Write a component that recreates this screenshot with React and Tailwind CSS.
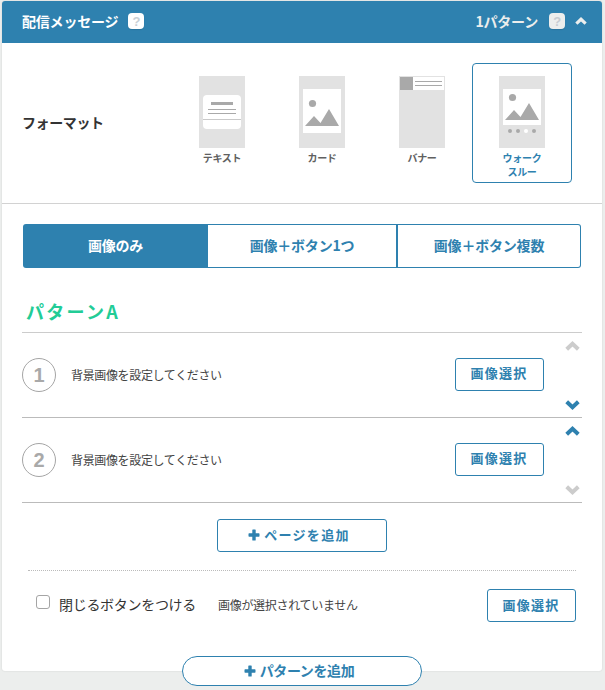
import React from "react";

function Chevron({ down, className, size = 15 }) {
  return (
    <svg
      className={className}
      width={size}
      height={(size * 10) / 15}
      viewBox="0 0 15 10"
      fill="none"
      stroke="currentColor"
      strokeWidth="4"
    >
      <path d={down ? "M1.7 1.8 L7.5 7.2 L13.3 1.8" : "M1.7 8.2 L7.5 2.8 L13.3 8.2"} />
    </svg>
  );
}

function Plus({ className }) {
  return (
    <svg className={className} width="12" height="12" viewBox="0 0 12 12" fill="currentColor">
      <path d="M4.9 0.5h2.2a.6.6 0 0 1 .6.6v3.2h3.2a.6.6 0 0 1 .6.6v2.2a.6.6 0 0 1-.6.6H7.7v3.2a.6.6 0 0 1-.6.6H4.9a.6.6 0 0 1-.6-.6V7.7H1.1a.6.6 0 0 1-.6-.6V4.9a.6.6 0 0 1 .6-.6h3.2V1.1a.6.6 0 0 1 .6-.6z" />
    </svg>
  );
}

function Help({ className }) {
  return (
    <span
      className={`flex h-4 w-4 items-center justify-center rounded-[4px] font-['Liberation_Sans',sans-serif] text-[13px] leading-none font-bold shadow-[0_1px_1px_rgba(0,0,0,0.1)] ${className}`}
    >
      ?
    </span>
  );
}

function TextArt() {
  return (
    <svg width="46" height="72" viewBox="0 0 46 72">
      <rect width="46" height="72" fill="#e2e2e2" />
      <rect x="4" y="19" width="38" height="34" rx="4" fill="#fff" />
      <rect x="12" y="26" width="22" height="3" fill="#a9a9a9" />
      <rect x="9" y="33" width="28" height="1" fill="#a9a9a9" />
      <rect x="9" y="37" width="28" height="1" fill="#a9a9a9" />
      <rect x="4" y="43" width="38" height="1" fill="#c9c9c9" />
    </svg>
  );
}

function CardArt() {
  return (
    <svg width="46" height="72" viewBox="0 0 46 72">
      <rect width="46" height="72" fill="#e2e2e2" />
      <rect x="4" y="13" width="38" height="44" fill="#fff" />
      <circle cx="13.5" cy="27.5" r="3.6" fill="#a9a9a9" />
      <path d="M6 50 L15 40 L21.5 47 L30 33 L40 50 Z" fill="#a9a9a9" />
    </svg>
  );
}

function BannerArt() {
  return (
    <svg width="46" height="72" viewBox="0 0 46 72">
      <rect width="46" height="72" fill="#e2e2e2" />
      <rect x="1" y="1" width="44" height="13" fill="#fff" />
      <rect x="1" y="1" width="13" height="13" fill="#a9a9a9" />
      <rect x="16" y="5" width="27" height="1" fill="#a9a9a9" />
      <rect x="16" y="9" width="27" height="1" fill="#a9a9a9" />
    </svg>
  );
}

function WalkArt() {
  return (
    <svg width="46" height="72" viewBox="0 0 46 72">
      <rect width="46" height="72" fill="#e2e2e2" />
      <rect x="4" y="13" width="38" height="36" fill="#fff" />
      <circle cx="13.5" cy="21.5" r="3.6" fill="#a9a9a9" />
      <path d="M6 44 L15 34 L21.5 41 L30 27 L40 44 Z" fill="#a9a9a9" />
      <circle cx="11" cy="55" r="2" fill="#a9a9a9" />
      <circle cx="19" cy="55" r="2" fill="#a9a9a9" />
      <circle cx="27" cy="55" r="2" fill="#fff" />
      <circle cx="35" cy="55" r="2" fill="#a9a9a9" />
    </svg>
  );
}

function Format({ art, children, selected }) {
  return (
    <div
      className={`flex h-[120px] w-[100px] flex-col items-center rounded-[4px] border pt-3 text-center text-[10px] leading-[14px] font-bold tracking-[-0.3px] ${
        selected ? "border-[#2e81af] text-[#2e81af]" : "border-transparent text-[#606060]"
      }`}
    >
      {art}
      <div className="mt-[3px]">{children}</div>
    </div>
  );
}

function SelectButton() {
  return (
    <button className="block h-[33px] w-[89px] rounded-[3px] border border-[#2e81af] pr-[1px] pb-[3px] text-[13px] leading-none font-bold tracking-[1.3px] text-[#2e81af]">
      画像選択
    </button>
  );
}

function PageRow({ n, upClass, downClass }) {
  return (
    <div className="flex h-[85px] items-center border-b border-[#bbb]">
      <div className="flex h-[34px] w-[34px] items-center justify-center rounded-full border border-[#a5a5a5] font-['Liberation_Sans',sans-serif] text-[20px] leading-none font-bold text-[#a9a9a9]">
        {n}
      </div>
      <div className="ml-[15px] text-[12px] leading-none tracking-[-0.35px] text-[#444]">
        背景画像を設定してください
      </div>
      <div className="ml-auto pb-[2px]">
        <SelectButton />
      </div>
      <div className="mr-[2px] ml-5 flex h-full w-4 flex-col items-center justify-between pt-2 pb-[7px]">
        <Chevron className={upClass} />
        <Chevron down className={downClass} />
      </div>
    </div>
  );
}

export default function App() {
  return (
    <div className="h-[690px] w-[605px] overflow-hidden bg-[#eceeed] pt-[1px] pl-[2px] font-['Noto_Sans_CJK_JP',sans-serif]">
      <div className="h-[670px] w-[600px] rounded-[3px] bg-white shadow-[0_0_2px_rgba(0,0,0,0.12)]">
        <div className="flex h-[42px] items-center rounded-t-[3px] bg-[#2e81af] pr-[15px] pb-[2px] pl-5 text-[14px] leading-none font-bold tracking-[-0.2px] text-white">
          <span>配信メッセージ</span>
          <Help className="ml-[10px] bg-white text-[#c9d0d6]" />
          <span className="ml-auto text-[#eceeed]">1パターン</span>
          <Help className="ml-[11px] bg-[#eceeed] text-[#c6ccd2]" />
          <Chevron size={12} className="ml-[10px] text-[#eceeed]" />
        </div>

        <div className="flex h-[161px] items-start border-b border-[#d2d2d2] pt-5">
          <div className="mt-[52px] w-[168px] pl-5 text-[14px] leading-none font-bold tracking-[-0.4px] text-[#333]">
            フォーマット
          </div>
          <div className="ml-[2px] flex">
            <Format art={<TextArt />}>テキスト</Format>
            <Format art={<CardArt />}>カード</Format>
            <Format art={<BannerArt />}>バナー</Format>
            <Format art={<WalkArt />} selected>
              ウォーク
              <br />
              スルー
            </Format>
          </div>
        </div>

        <div className="mt-5 ml-[21px] flex h-11 w-[558px] text-[14px] leading-none font-bold tracking-[-0.2px] text-[#2e81af]">
          <div className="flex w-[185px] items-center justify-center rounded-l-[3px] bg-[#2e81af] pb-[2px] text-white">
            画像のみ
          </div>
          <div className="flex w-[190px] items-center justify-center border-y border-r-2 border-[#2e81af] pb-[2px]">
            画像＋ボタン1つ
          </div>
          <div className="flex w-[183px] items-center justify-center rounded-r-[3px] border border-l-0 border-[#2e81af] pb-[2px]">
            画像＋ボタン複数
          </div>
        </div>

        <div className="mx-5 flex h-[65px] items-end border-b border-[#ccc] pb-[12px] pl-1 text-[18px] leading-none font-bold tracking-[2.3px] text-[#22cc96]">
          パターンA
        </div>
        <div className="mx-5">
          <PageRow n="1" upClass="text-[#ccc]" downClass="text-[#2e81af]" />
          <PageRow n="2" upClass="text-[#2e81af]" downClass="text-[#ccc]" />
        </div>

        <div className="mt-4 flex justify-center">
          <button className="flex h-[33px] w-[170px] items-center justify-center rounded-[3px] border border-[#2e81af] pb-[1px] pr-[6px] text-[13px] leading-none font-bold tracking-[1.3px] text-[#2e81af]">
            <Plus className="mr-1" />
            <span className="pb-[2px]">ページを追加</span>
          </button>
        </div>

        <div className="mt-[18px] mr-[26px] ml-[26px] border-t border-dotted border-[#bbb]" />
        <div className="mt-[18px] mr-[26px] flex h-[33px] items-center pl-[34px] leading-none text-[#333]">
          <div className="mb-[7px] h-[14px] w-[14px] rounded-[3px] border border-[#a5a5a5] bg-white" />
          <span className="ml-[9px] w-[159px] pb-[3px] text-[14px] tracking-[-0.3px]">
            閉じるボタンをつける
          </span>
          <span className="pb-[1px] text-[12px] tracking-[-0.3px] text-[#444]">
            画像が選択されていません
          </span>
          <span className="ml-auto">
            <SelectButton />
          </span>
        </div>

        <div className="mt-[34px] flex justify-center">
          <button className="flex h-[30px] w-[240px] items-center justify-center rounded-full border border-[#2e81af] bg-white pr-[6px] text-[14px] leading-none font-bold tracking-[-0.4px] text-[#2e81af]">
            <Plus className="mr-1" />
            <span className="pb-[2px]">パターンを追加</span>
          </button>
        </div>
      </div>
    </div>
  );
}
